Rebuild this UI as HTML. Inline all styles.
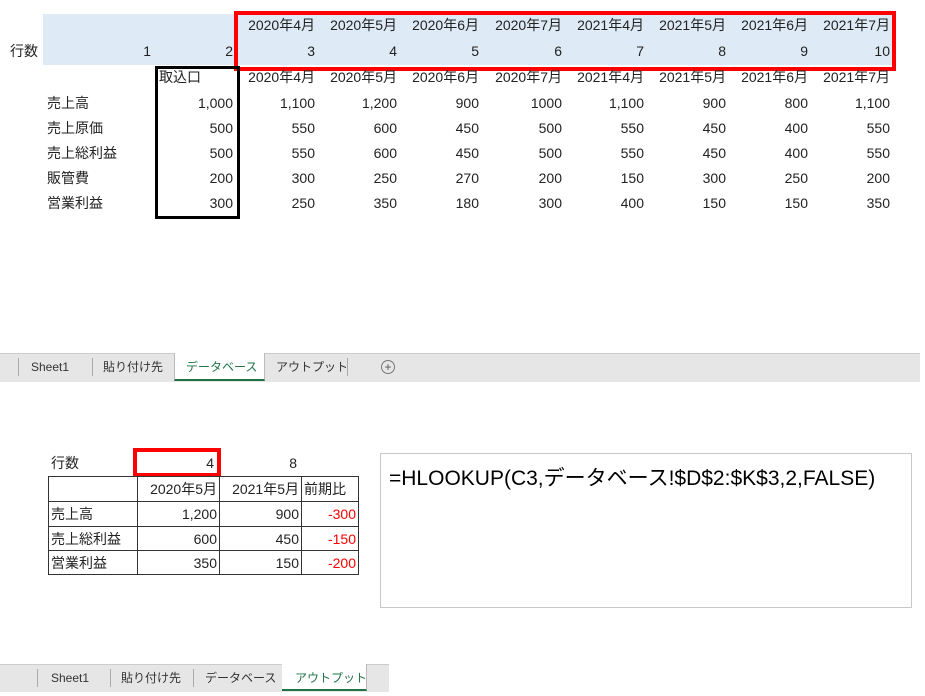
<!DOCTYPE html>
<html><head><meta charset="utf-8"><style>
body{margin:0;width:925px;height:696px;position:relative;background:#fff;overflow:hidden;font-family:"Liberation Sans","Noto Sans CJK JP",sans-serif;font-size:14px;color:#222}
.a{position:absolute;white-space:nowrap;line-height:18px}
.r{text-align:right}
.tab{position:absolute;font-size:12px;color:#333;line-height:18px;white-space:nowrap}
.sep{position:absolute;width:1px;background:#aaa}
</style></head><body>
<div style="position:absolute;left:43px;top:14px;width:851px;height:51px;background:#deebf6"></div>
<div style="position:absolute;left:234px;top:11px;width:654px;height:52px;border:4px solid #f00"></div>
<div style="position:absolute;left:155px;top:66px;width:79px;height:147px;border:3px solid #000"></div>

<div class="a" style="left:10px;top:42px">行数</div>
<div class="a" style="left:159px;top:68px">取込口</div>
<div class="a" style="left:47px;top:94px">売上高</div>
<div class="a" style="left:47px;top:119px">売上原価</div>
<div class="a" style="left:47px;top:144px">売上総利益</div>
<div class="a" style="left:47px;top:169px">販管費</div>
<div class="a" style="left:47px;top:194px">営業利益</div>

<div id="g"></div>

<!-- tab bar 1 -->
<div style="position:absolute;left:0;top:353px;width:920px;height:28px;background:#e6e6e6;border-top:1px solid #ccc"></div>
<div class="sep" style="left:18px;top:358px;height:18px"></div>
<div class="tab" style="left:31px;top:358px">Sheet1</div>
<div class="sep" style="left:92px;top:358px;height:18px"></div>
<div class="tab" style="left:103px;top:358px">貼り付け先</div>
<div style="position:absolute;left:174px;top:353px;width:89px;height:26px;background:#fff;border-left:1px solid #bbb;border-right:1px solid #bbb;border-bottom:2px solid #217346"></div>
<div class="tab" style="left:186px;top:358px;color:#217346">データベース</div>
<div class="tab" style="left:276px;top:358px">アウトプット</div>
<div class="sep" style="left:347px;top:358px;height:18px"></div>
<div style="position:absolute;left:381px;top:360px;width:12px;height:12px;border:1px solid #777;border-radius:50%;font-size:12px;line-height:12px;text-align:center;color:#555">+</div>

<!-- bottom table -->
<div class="a" style="left:51px;top:454px">行数</div>
<div style="position:absolute;left:133px;top:448px;width:80px;height:21px;border:4px solid #f00"></div>
<div class="a r" style="left:133px;width:81px;top:454px">4</div>
<div class="a r" style="left:218px;width:79px;top:454px">8</div>
<table style="position:absolute;left:48px;top:476px;border-collapse:collapse;font-size:14px;color:#222">
<tr style="height:25px"><td style="width:86px;border:1px solid #333"></td><td class="r" style="width:79px;border:1px solid #333;padding:0 2px 0 0">2020年5月</td><td class="r" style="width:79px;border:1px solid #333;padding:0 2px 0 0">2021年5月</td><td style="width:54px;border:1px solid #333;padding:0 0 0 2px">前期比</td></tr>
<tr style="height:25px"><td style="border:1px solid #333;padding-left:2px">売上高</td><td class="r" style="border:1px solid #333;padding-right:2px">1,200</td><td class="r" style="border:1px solid #333;padding-right:2px">900</td><td class="r" style="border:1px solid #333;padding-right:2px;color:#f00">-300</td></tr>
<tr style="height:24px"><td style="border:1px solid #333;padding-left:2px">売上総利益</td><td class="r" style="border:1px solid #333;padding-right:2px">600</td><td class="r" style="border:1px solid #333;padding-right:2px">450</td><td class="r" style="border:1px solid #333;padding-right:2px;color:#f00">-150</td></tr>
<tr style="height:24px"><td style="border:1px solid #333;padding-left:2px">営業利益</td><td class="r" style="border:1px solid #333;padding-right:2px">350</td><td class="r" style="border:1px solid #333;padding-right:2px">150</td><td class="r" style="border:1px solid #333;padding-right:2px;color:#f00">-200</td></tr>
</table>

<div style="position:absolute;left:380px;top:453px;width:530px;height:153px;border:1px solid #c8c8c8"></div>
<div class="a" style="left:389px;top:466px;font-size:21px;line-height:26px;color:#000">=HLOOKUP(C3,データベース!$D$2:$K$3,2,FALSE)</div>

<!-- tab bar 2 -->
<div style="position:absolute;left:0;top:664px;width:389px;height:27px;background:#e6e6e6;border-top:1px solid #ccc"></div>
<div class="sep" style="left:37px;top:669px;height:18px"></div>
<div class="tab" style="left:51px;top:669px">Sheet1</div>
<div class="sep" style="left:110px;top:669px;height:18px"></div>
<div class="tab" style="left:121px;top:669px">貼り付け先</div>
<div class="sep" style="left:193px;top:669px;height:18px"></div>
<div class="tab" style="left:205px;top:669px">データベース</div>
<div style="position:absolute;left:282px;top:664px;width:84px;height:25px;background:#fff;border-right:1px solid #bbb;border-bottom:2px solid #217346"></div>
<div class="tab" style="left:295px;top:669px;color:#217346">アウトプット</div>

<script>
var g=document.getElementById('g'),h='';
var R=[153,235,317,399,481,564,646,728,810,892];
var D=['2020年4月','2020年5月','2020年6月','2020年7月','2021年4月','2021年5月','2021年6月','2021年7月'];
var rows=[
['1,000','1,100','1,200','900','1000','1,100','900','800','1,100'],
['500','550','600','450','500','550','450','400','550'],
['500','550','600','450','500','550','450','400','550'],
['200','300','250','270','200','150','300','250','200'],
['300','250','350','180','300','400','150','150','350']];
function c(col,top,t){h+='<div class="a r" style="left:'+(R[col]-90)+'px;width:88px;top:'+top+'px">'+t+'</div>';}
for(var i=0;i<10;i++)c(i,42,i+1);
for(var i=0;i<8;i++){c(i+2,16,D[i]);c(i+2,68,D[i]);}
var tops=[94,119,144,169,194];
for(var r=0;r<5;r++)for(var k=0;k<9;k++)c(k+1,tops[r],rows[r][k]);
g.innerHTML=h;
</script>
</body></html>
